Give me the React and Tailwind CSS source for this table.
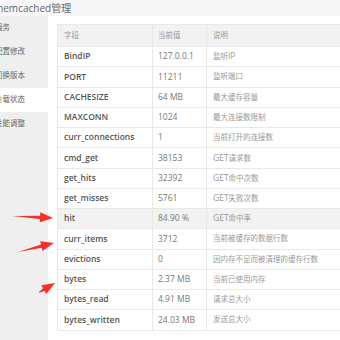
import React from 'react';

const menu = [
  { label: '服务', active: false },
  { label: '配置修改', active: false },
  { label: '切换版本', active: false },
  { label: '负载状态', active: true },
  { label: '性能调整', active: false },
];

const rows = [
  ['BindIP', '127.0.0.1', '监听IP'],
  ['PORT', '11211', '监听端口'],
  ['CACHESIZE', '64 MB', '最大缓存容量'],
  ['MAXCONN', '1024', '最大连接数限制'],
  ['curr_connections', '1', '当前打开的连接数'],
  ['cmd_get', '38153', 'GET请求数'],
  ['get_hits', '32392', 'GET命中次数'],
  ['get_misses', '5761', 'GET失败次数'],
  ['hit', '84.90 %', 'GET命中率'],
  ['curr_items', '3712', '当前被缓存的数据行数'],
  ['evictions', '0', '因内存不足而被清理的缓存行数'],
  ['bytes', '2.37 MB', '当前已使用内存'],
  ['bytes_read', '4.91 MB', '请求总大小'],
  ['bytes_written', '24.03 MB', '发送总大小'],
];

// red annotation arrows: tail -> tip
const arrows = [
  [12, 216, 53, 218],
  [18, 252, 54, 243],
  [38, 293, 55, 283],
];

function arrowPoints([x1, y1, x2, y2]) {
  const dx = x2 - x1;
  const dy = y2 - y1;
  const len = Math.hypot(dx, dy);
  const ux = dx / len;
  const uy = dy / len;
  const nx = -uy;
  const ny = ux;
  const head = 13;
  const bx = x2 - ux * head;
  const by = y2 - uy * head;
  const pts = [
    [x1, y1],
    [bx + nx * 1.6, by + ny * 1.6],
    [bx + nx * 5, by + ny * 5],
    [x2, y2],
    [bx - nx * 5, by - ny * 5],
    [bx - nx * 1.6, by - ny * 1.6],
  ];
  return pts.map((p) => p.join(',')).join(' ');
}

// latin bits (GET, IP) keep the larger size, CJK runs are set smaller
function Desc({ text }) {
  const parts = text.split(/([A-Za-z]+)/).filter(Boolean);
  return parts.map((p, i) =>
    /^[A-Za-z]+$/.test(p) ? (
      <span key={i} className="text-[8.5px]">{p}</span>
    ) : (
      <span key={i}>{p}</span>
    )
  );
}

export default function App() {
  return (
    <div className="relative w-[340px] h-[340px] overflow-hidden bg-white font-['Open_Sans','Noto_Sans_CJK_SC',sans-serif]">
      {/* Title bar */}
      <div className="h-4 bg-[#f7f7f7] flex items-center">
        <span className="-ml-[6px] text-[10px] text-[#666] leading-none">memcached管理</span>
      </div>

      <div className="flex h-[324px]">
        {/* Sidebar */}
        <div className="w-12 shrink-0 bg-[#efefef]">
          {menu.map((m) => (
            <div
              key={m.label}
              className={`h-6 flex items-center text-[7.5px] text-[#666] whitespace-nowrap ${m.active ? 'bg-white' : ''}`}
            >
              <span className="-ml-[5px]">{m.label}</span>
            </div>
          ))}
        </div>

        {/* Content */}
        <div className="flex-1 pl-[9px] pt-2">
          <table className="w-[300px] border-collapse border border-[#e8e8e8] text-[8.5px] table-fixed">
            <colgroup>
              <col className="w-[95px]" />
              <col className="w-[54px]" />
              <col />
            </colgroup>
            <thead>
              <tr className="h-[22px] bg-[#f2f2f2] text-[#999] text-[7.5px]">
                <th className="font-normal text-left px-[6px] border border-[#e8e8e8]">字段</th>
                <th className="font-normal text-left px-[5px] border border-[#e8e8e8]">当前值</th>
                <th className="font-normal text-left px-[6px] border border-[#e8e8e8]">说明</th>
              </tr>
            </thead>
            <tbody>
              {rows.map(([k, v, d]) => (
                <tr key={k} className={`h-[20.25px] ${k === 'hit' ? 'bg-[#f2f2f2]' : ''}`}>
                  <td className="px-[6px] font-semibold text-[#555] border border-[#e8e8e8] whitespace-nowrap">{k}</td>
                  <td className="px-[5px] text-[#777] border border-[#e8e8e8] whitespace-nowrap">{v}</td>
                  <td className="px-[6px] text-[7.5px] text-[#999] border border-[#e8e8e8] whitespace-nowrap">
                    <Desc text={d} />
                  </td>
                </tr>
              ))}
            </tbody>
          </table>
        </div>
      </div>

      {/* Annotation arrows */}
      <svg className="absolute inset-0 pointer-events-none" width="340" height="340" viewBox="0 0 340 340">
        {arrows.map((a, i) => (
          <polygon key={i} points={arrowPoints(a)} fill="#f5312a" />
        ))}
      </svg>
    </div>
  );
}
